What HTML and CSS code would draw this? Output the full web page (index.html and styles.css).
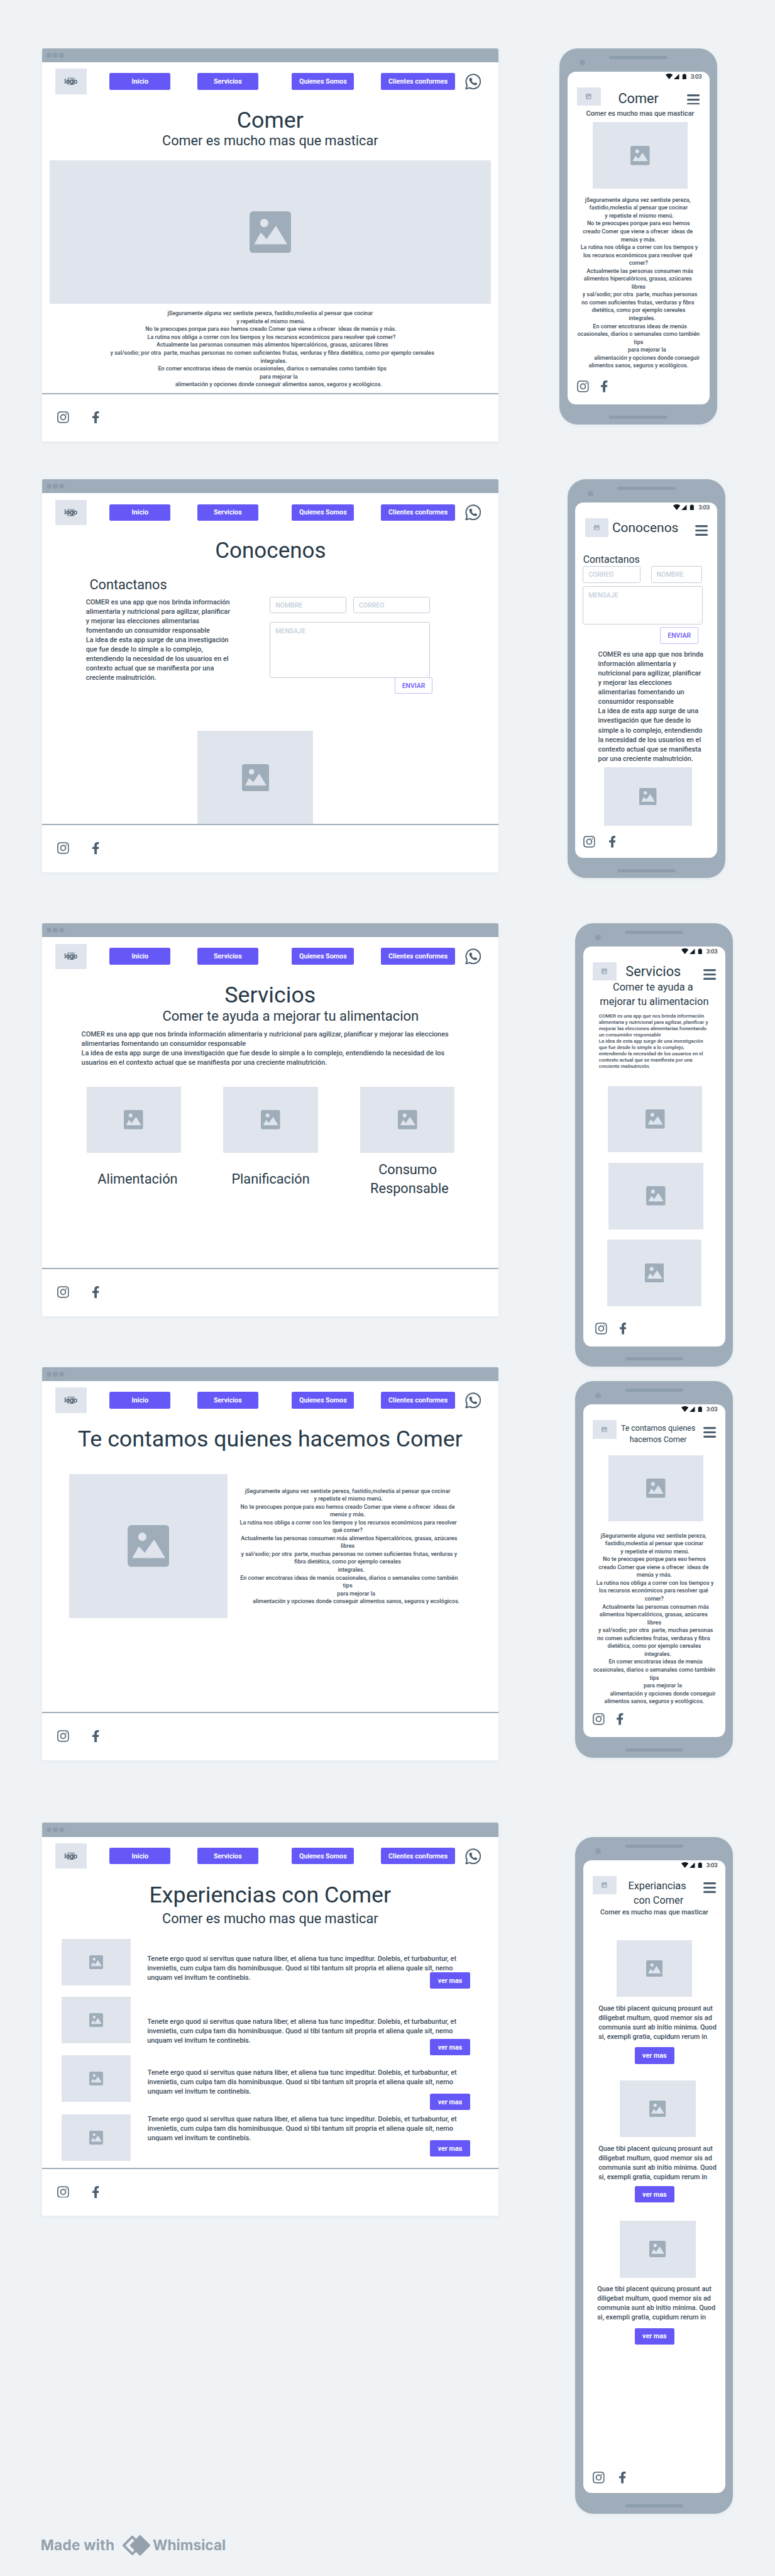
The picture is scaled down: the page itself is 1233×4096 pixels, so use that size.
FILE: index.html
```html
<!DOCTYPE html>
<html lang="es">
<head>
<meta charset="utf-8">
<title>Comer - wireframes</title>
<link rel="stylesheet" href="styles.css">
</head>
<body>
<svg class="defs" aria-hidden="true">
  <symbol id="pic" viewBox="0 0 106 106">
    <rect width="106" height="106" rx="10" fill="#9eadb9"/>
    <circle cx="37.3" cy="29.8" r="10.5" fill="#e0e5ed"/>
    <path d="M13.5 82.5L28.8 55.5 43.6 72 67 38.500 94 82.500z" fill="#e0e5ed" stroke="#e0e5ed" stroke-width="2" stroke-linejoin="round"/>
  </symbol>
  <symbol id="wa" viewBox="0 0 40 40">
    <path d="M2.200 38.300L4.900 29.300A17.900 18 0 1 1 11.300 35.600z" fill="none" stroke="#4c5f6f" stroke-width="3.200"/>
    <path d="M13.500 10.800c1.500-.3 2.600.2 3 1.200l1.200 3.400c.3 1-.6 2-1.400 2.800 1.500 3 3.600 4.800 6.600 6 1-.9 1.800-2 2.900-1.600l3.400 1.400c1 .5 1 1.800.6 2.900-.8 1.800-2.700 2.600-4.800 2.300C17.500 28 10.800 20.500 10.200 15c-.1-2 1.200-3.700 3.300-4.200z" fill="#4c5f6f"/>
  </symbol>
  <symbol id="ig" viewBox="0 0 30 30">
    <rect x="1.500" y="1.500" width="27" height="27" rx="6.500" fill="none" stroke="#4c5f6f" stroke-width="2.600"/>
    <circle cx="15" cy="15" r="6.300" fill="none" stroke="#4c5f6f" stroke-width="2.700"/>
    <circle cx="22.800" cy="7.200" r="1.800" fill="#4c5f6f"/>
  </symbol>
  <symbol id="fb" viewBox="22 0 276 512" preserveAspectRatio="none">
    <path d="M279.140 288l14.220-92.660h-88.910v-60.130c0-25.350 12.420-50.060 52.240-50.060h40.420V6.260S260.430 0 225.360 0c-73.220 0-121.080 44.380-121.080 124.720v70.620H22.890V288h81.390v224h100.170V288z" fill="#4c5f6f"/>
  </symbol>
  <symbol id="status" viewBox="0 0 53 14.500">
    <path d="M0 3.200C5-.900 13-.900 18 3.200L9 14.500zM20.600 14.500L34.300.800V14.500zM42.700 2.200h2.300V.700h5v1.500h2.400v12.300h-9.700z" fill="#101a21"/>
  </symbol>
  <symbol id="menu" viewBox="0 0 32 27">
    <path d="M2.500 2.500h27M2.500 13.500h27M2.500 24.500h27" stroke="#4c5f6f" stroke-width="5" stroke-linecap="round"/>
  </symbol>
  <symbol id="grip" viewBox="0 0 10 10">
    <path d="M1 9L9 1M5 9l4-4" stroke="#c3ced8" stroke-width="1"/>
  </symbol>
</svg>

<main class="canvas">
<div class="desktops">

  <section class="window">
    <div class="bar"><i></i><i></i><i></i></div>
    <nav>
      <div class="ph logo"><svg><use href="#pic"/></svg><span>logo</span></div>
      <a class="btn inicio">Inicio</a><a class="btn servicios">Servicios</a><a class="btn quienes">Quienes Somos</a><a class="btn clientes">Clientes conformes</a>
      <svg class="wa"><use href="#wa"/></svg>
    </nav>
    <div class="content">
      <h1>Comer</h1>
      <h2>Comer es mucho mas que masticar</h2>
      <div class="ph hero"><svg class="lg"><use href="#pic"/></svg></div>
      <p class="small home-text">jSeguramente alguna vez sentiste pereza, fastidio,molestia al pensar que cocinar
 y repetiste el mismo menú.
 No te preocupes porque para eso hemos creado Comer que viene a ofrecer  ideas de menús y más.
  La rutina nos obliga a correr con los tiempos y los recursos económicos para resolver qué comer?
   Actualmente las personas consumen más alimentos hipercalóricos, grasas, azúcares libres
   y sal/sodio; por otra  parte, muchas personas no comen suficientes frutas, verduras y fibra dietética, como por ejemplo cereales
     integrales.
   En comer encotraras ideas de menús ocasionales, diarios o semanales como también tips
            para mejorar la
            alimentación y opciones donde conseguir alimentos sanos, seguros y ecológicos.</p>
    </div>
    <footer><svg class="ig"><use href="#ig"/></svg><svg class="fb"><use href="#fb"/></svg></footer>
  </section>

  <section class="window w2">
    <div class="bar"><i></i><i></i><i></i></div>
    <nav>
      <div class="ph logo"><svg><use href="#pic"/></svg><span>logo</span></div>
      <a class="btn inicio">Inicio</a><a class="btn servicios">Servicios</a><a class="btn quienes">Quienes Somos</a><a class="btn clientes">Clientes conformes</a>
      <svg class="wa"><use href="#wa"/></svg>
    </nav>
    <div class="content">
      <h1>Conocenos</h1>
      <div class="contact">
        <div class="about">
          <h2>Contactanos</h2>
          <p>COMER es una app que nos brinda información
alimentaria y nutricional para agilizar, planificar
y mejorar las elecciones alimentarias
fomentando un consumidor responsable
La idea de esta app surge de una investigación
que fue desde lo simple a lo complejo,
entendiendo la necesidad de los usuarios en el
contexto actual que se manifiesta por una
creciente malnutrición.</p>
        </div>
        <div class="form">
          <div class="fields"><div class="field">NOMBRE</div><div class="field">CORREO</div></div>
          <div class="area">MENSAJE<svg><use href="#grip"/></svg></div>
          <a class="send">ENVIAR</a>
        </div>
      </div>
      <div class="ph office"><svg class="md"><use href="#pic"/></svg></div>
    </div>
    <footer><svg class="ig"><use href="#ig"/></svg><svg class="fb"><use href="#fb"/></svg></footer>
  </section>

  <section class="window w3">
    <div class="bar"><i></i><i></i><i></i></div>
    <nav>
      <div class="ph logo"><svg><use href="#pic"/></svg><span>logo</span></div>
      <a class="btn inicio">Inicio</a><a class="btn servicios">Servicios</a><a class="btn quienes">Quienes Somos</a><a class="btn clientes">Clientes conformes</a>
      <svg class="wa"><use href="#wa"/></svg>
    </nav>
    <div class="content">
      <h1>Servicios</h1>
      <h2 class="tagline">Comer te ayuda a mejorar tu alimentacion</h2>
      <p class="intro">COMER es una app que nos brinda información alimentaria y nutricional para agilizar, planificar y mejorar las elecciones
alimentarias fomentando un consumidor responsable
La idea de esta app surge de una investigación que fue desde lo simple a lo complejo, entendiendo la necesidad de los
usuarios en el contexto actual que se manifiesta por una creciente malnutrición.</p>
      <div class="services">
        <div class="service"><div class="ph"><svg class="sm"><use href="#pic"/></svg></div><h3 class="s1">Alimentación</h3></div>
        <div class="service"><div class="ph"><svg class="sm"><use href="#pic"/></svg></div><h3>Planificación</h3></div>
        <div class="service"><div class="ph"><svg class="sm"><use href="#pic"/></svg></div><h3 class="s3">Consumo 
Responsable</h3></div>
      </div>
    </div>
    <footer><svg class="ig"><use href="#ig"/></svg><svg class="fb"><use href="#fb"/></svg></footer>
  </section>

  <section class="window w4">
    <div class="bar"><i></i><i></i><i></i></div>
    <nav>
      <div class="ph logo"><svg><use href="#pic"/></svg><span>logo</span></div>
      <a class="btn inicio">Inicio</a><a class="btn servicios">Servicios</a><a class="btn quienes">Quienes Somos</a><a class="btn clientes">Clientes conformes</a>
      <svg class="wa"><use href="#wa"/></svg>
    </nav>
    <div class="content">
      <h1>Te contamos quienes hacemos Comer</h1>
      <div class="team">
        <div class="ph"><svg class="lg"><use href="#pic"/></svg></div>
        <p class="small">jSeguramente alguna vez sentiste pereza, fastidio,molestia al pensar que cocinar
 y repetiste el mismo menú.
 No te preocupes porque para eso hemos creado Comer que viene a ofrecer  ideas de 
menús y más.
  La rutina nos obliga a correr con los tiempos y los recursos económicos para resolver 
qué comer?
   Actualmente las personas consumen más alimentos hipercalóricos, grasas, azúcares 
libres
   y sal/sodio; por otra  parte, muchas personas no comen suficientes frutas, verduras y 
fibra dietética, como por ejemplo cereales
     integrales.
   En comer encotraras ideas de menús ocasionales, diarios o semanales como también 
tips
            para mejorar la
            alimentación y opciones donde conseguir alimentos sanos, seguros y ecológicos.</p>
      </div>
    </div>
    <footer><svg class="ig"><use href="#ig"/></svg><svg class="fb"><use href="#fb"/></svg></footer>
  </section>

  <section class="window w5">
    <div class="bar"><i></i><i></i><i></i></div>
    <nav>
      <div class="ph logo"><svg><use href="#pic"/></svg><span>logo</span></div>
      <a class="btn inicio">Inicio</a><a class="btn servicios">Servicios</a><a class="btn quienes">Quienes Somos</a><a class="btn clientes">Clientes conformes</a>
      <svg class="wa"><use href="#wa"/></svg>
    </nav>
    <div class="content">
      <h1>Experiencias con Comer</h1>
      <h2 class="sub">Comer es mucho mas que masticar</h2>
      <div class="stories">
        <div class="thumbs">
          <div class="ph"><svg class="xs"><use href="#pic"/></svg></div>
          <div class="ph"><svg class="xs"><use href="#pic"/></svg></div>
          <div class="ph"><svg class="xs"><use href="#pic"/></svg></div>
          <div class="ph"><svg class="xs"><use href="#pic"/></svg></div>
        </div>
        <div class="quotes">
          <p>Tenete ergo quod si servitus quae natura liber, et aliena tua tunc impeditur. Dolebis, et turbabuntur, et
invenietis, cum culpa tam dis hominibusque. Quod si tibi tantum sit propria et aliena quale sit, nemo
unquam vel invitum te continebis.</p>
          <a class="btn more m1">ver mas</a>
          <p class="q2">Tenete ergo quod si servitus quae natura liber, et aliena tua tunc impeditur. Dolebis, et turbabuntur, et
invenietis, cum culpa tam dis hominibusque. Quod si tibi tantum sit propria et aliena quale sit, nemo
unquam vel invitum te continebis.</p>
          <a class="btn more m2">ver mas</a>
          <p class="q3">Tenete ergo quod si servitus quae natura liber, et aliena tua tunc impeditur. Dolebis, et turbabuntur, et
invenietis, cum culpa tam dis hominibusque. Quod si tibi tantum sit propria et aliena quale sit, nemo
unquam vel invitum te continebis.</p>
          <a class="btn more m3">ver mas</a>
          <p class="q4">Tenete ergo quod si servitus quae natura liber, et aliena tua tunc impeditur. Dolebis, et turbabuntur, et
invenietis, cum culpa tam dis hominibusque. Quod si tibi tantum sit propria et aliena quale sit, nemo
unquam vel invitum te continebis.</p>
          <a class="btn more m3">ver mas</a>
        </div>
      </div>
    </div>
    <footer><svg class="ig"><use href="#ig"/></svg><svg class="fb"><use href="#fb"/></svg></footer>
  </section>

  <div class="credit">
    <span class="made">Made with</span>
    <svg viewBox="0 0 72.300 52"><path d="M26.300 4.200L48 26 26.300 47.800 4.500 26z" fill="none" stroke="#94a1ac" stroke-width="6" stroke-linejoin="round"/><path d="M46 2L70 26 46 50 22 26z" fill="#94a1ac" stroke="#94a1ac" stroke-width="4" stroke-linejoin="round"/></svg>
    <span class="brand">Whimsical</span>
  </div>
</div>

<div class="phones">

  <section class="phone p1">
    <div class="top"><i class="cam"></i><i class="slot"></i></div>
    <div class="screen">
      <div class="status"><svg><use href="#status"/></svg><span>3:03</span></div>
      <header><div class="ph"><svg><use href="#pic"/></svg></div><h2>Comer</h2><svg class="menu"><use href="#menu"/></svg></header>
      <p class="sub">Comer es mucho mas que masticar</p>
      <div class="ph photo"><svg class="sm"><use href="#pic"/></svg></div>
      <p class="small">jSeguramente alguna vez sentiste pereza, 
fastidio,molestia al pensar que cocinar
 y repetiste el mismo menú.
 No te preocupes porque para eso hemos 
creado Comer que viene a ofrecer  ideas de 
menús y más.
  La rutina nos obliga a correr con los tiempos y 
los recursos económicos para resolver qué 
comer?
   Actualmente las personas consumen más 
alimentos hipercalóricos, grasas, azúcares 
libres
   y sal/sodio; por otra  parte, muchas personas 
no comen suficientes frutas, verduras y fibra 
dietética, como por ejemplo cereales
     integrales.
   En comer encotraras ideas de menús 
ocasionales, diarios o semanales como también
tips
            para mejorar la
            alimentación y opciones donde conseguir
alimentos sanos, seguros y ecológicos.</p>
      <div class="social"><svg class="ig"><use href="#ig"/></svg><svg class="fb"><use href="#fb"/></svg></div>
    </div>
    <i class="slot"></i>
  </section>

  <section class="phone p2">
    <div class="top"><i class="cam"></i><i class="slot"></i></div>
    <div class="screen">
      <div class="status"><svg><use href="#status"/></svg><span>3:03</span></div>
      <header><div class="ph"><svg><use href="#pic"/></svg></div><h2>Conocenos</h2><svg class="menu"><use href="#menu"/></svg></header>
      <h3>Contactanos</h3>
      <div class="fields"><div class="field">CORREO</div><div class="field short">NOMBRE</div></div>
      <div class="area">MENSAJE<svg><use href="#grip"/></svg></div>
      <a class="send">ENVIAR</a>
      <p class="about">COMER es una app que nos brinda
información alimentaria y
nutricional para agilizar, planificar
y mejorar las elecciones
alimentarias fomentando un
consumidor responsable
La idea de esta app surge de una
investigación que fue desde lo
simple a lo complejo, entendiendo
la necesidad de los usuarios en el
contexto actual que se manifiesta
por una creciente malnutrición.</p>
      <div class="ph photo"><svg class="sm"><use href="#pic"/></svg></div>
      <div class="social"><svg class="ig"><use href="#ig"/></svg><svg class="fb"><use href="#fb"/></svg></div>
    </div>
    <i class="slot"></i>
  </section>

  <section class="phone p3">
    <div class="top"><i class="cam"></i><i class="slot"></i></div>
    <div class="screen">
      <div class="status"><svg><use href="#status"/></svg><span>3:03</span></div>
      <header><div class="ph"><svg><use href="#pic"/></svg></div><h2>Servicios</h2><svg class="menu"><use href="#menu"/></svg></header>
      <h3>Comer te ayuda a 
mejorar tu alimentacion</h3>
      <p class="tiny">COMER es una app que nos brinda información
alimentaria y nutricional para agilizar, planificar y
mejorar las elecciones alimentarias fomentando
un consumidor responsable
La idea de esta app surge de una investigación
que fue desde lo simple a lo complejo,
entendiendo la necesidad de los usuarios en el
contexto actual que se manifiesta por una
creciente malnutrición.</p>
      <div class="ph photo a"><svg class="sm"><use href="#pic"/></svg></div>
      <div class="ph photo b"><svg class="sm"><use href="#pic"/></svg></div>
      <div class="ph photo c"><svg class="sm"><use href="#pic"/></svg></div>
      <div class="social"><svg class="ig"><use href="#ig"/></svg><svg class="fb"><use href="#fb"/></svg></div>
    </div>
    <i class="slot"></i>
  </section>

  <section class="phone p4">
    <div class="top"><i class="cam"></i><i class="slot"></i></div>
    <div class="screen">
      <div class="status"><svg><use href="#status"/></svg><span>3:03</span></div>
      <header><div class="ph"><svg><use href="#pic"/></svg></div><h2>Te contamos quienes
hacemos Comer</h2><svg class="menu"><use href="#menu"/></svg></header>
      <div class="ph photo"><svg class="sm"><use href="#pic"/></svg></div>
      <p class="small">jSeguramente alguna vez sentiste pereza, 
fastidio,molestia al pensar que cocinar
 y repetiste el mismo menú.
 No te preocupes porque para eso hemos 
creado Comer que viene a ofrecer  ideas de 
menús y más.
  La rutina nos obliga a correr con los tiempos y 
los recursos económicos para resolver qué 
comer?
   Actualmente las personas consumen más 
alimentos hipercalóricos, grasas, azúcares 
libres
   y sal/sodio; por otra  parte, muchas personas 
no comen suficientes frutas, verduras y fibra 
dietética, como por ejemplo cereales
     integrales.
   En comer encotraras ideas de menús 
ocasionales, diarios o semanales como también
tips
            para mejorar la
            alimentación y opciones donde conseguir
alimentos sanos, seguros y ecológicos.</p>
      <div class="social"><svg class="ig"><use href="#ig"/></svg><svg class="fb"><use href="#fb"/></svg></div>
    </div>
    <i class="slot"></i>
  </section>

  <section class="phone p5">
    <div class="top"><i class="cam"></i><i class="slot"></i></div>
    <div class="screen">
      <div class="status"><svg><use href="#status"/></svg><span>3:03</span></div>
      <header><div class="ph"><svg><use href="#pic"/></svg></div><h2>Experiancias
 con Comer</h2><svg class="menu"><use href="#menu"/></svg></header>
      <p class="sub">Comer es mucho mas que masticar</p>
      <div class="ph photo a"><svg class="s42"><use href="#pic"/></svg></div>
      <p class="quote">Quae tibi placent quicunq prosunt aut
diligebat multum, quod memor sis ad
communia sunt ab initio minima. Quod
si, exempli gratia, cupidum rerum in</p>
      <a class="btn more">ver mas</a>
      <div class="ph photo b"><svg class="s42"><use href="#pic"/></svg></div>
      <p class="quote">Quae tibi placent quicunq prosunt aut
diligebat multum, quod memor sis ad
communia sunt ab initio minima. Quod
si, exempli gratia, cupidum rerum in</p>
      <a class="btn more near">ver mas</a>
      <div class="ph photo c"><svg class="s42"><use href="#pic"/></svg></div>
      <p class="quote last">Quae tibi placent quicunq prosunt aut
diligebat multum, quod memor sis ad
communia sunt ab initio minima. Quod
si, exempli gratia, cupidum rerum in</p>
      <a class="btn more">ver mas</a>
      <div class="social"><svg class="ig"><use href="#ig"/></svg><svg class="fb"><use href="#fb"/></svg></div>
    </div>
    <i class="slot"></i>
  </section>

</div>
</main>
</body>
</html>
```
FILE: styles.css
```css
/* 1rem stands for ten units of the wireframe canvas */
html { font-size: 6.2748px; }
* { box-sizing: border-box; }
body {
  margin: 0;
  background: #eff3f6;
  color: #3b4b59;
  font: 500 1.735rem/2.4rem Roboto, "Liberation Sans", sans-serif;
}
svg { display: block; flex: none; }
.defs { position: absolute; width: 0; height: 0; }
h1, h2, h3, p { margin: 0; white-space: pre; }
h1, h2, h3 { font-weight: 400; color: #273947; }
h1 { font-size: 5.7rem; line-height: 6.4rem; text-align: center; }
h2 { font-size: 3.46rem; line-height: 4rem; text-align: center; }
.small { font-size: 1.445rem; line-height: 2rem; text-align: center; }

.canvas { display: flex; align-items: flex-start; height: 4096px; padding: 12.2rem 0 0 10.6rem; overflow: hidden; }
.desktops { width: 115.8rem; }
.phones { margin-left: 15.5rem; }

/* shared pieces */
.ph { display: flex; align-items: center; justify-content: center; background: #e0e5ed; }
.lg { width: 10.6rem; height: 10.6rem; }
.md { width: 6.9rem; height: 6.9rem; }
.sm { width: 4.9rem; height: 4.9rem; }
.s42 { width: 4.2rem; height: 4.2rem; }
.xs { width: 3.5rem; height: 3.5rem; }
.ig { width: 3rem; height: 3rem; }
.fb { width: 1.7rem; height: 3.1rem; }
.btn {
  display: flex; align-items: center; justify-content: center;
  height: 4.2rem; border-radius: .4rem;
  background: #6658f6; color: #fff;
  font-size: 1.715rem; font-weight: 700;
}
.more { width: 10.1rem; }
.field, .area, .send { border: .2rem solid #c3ced8; border-radius: .4rem; font-size: 1.67rem; color: #c3d0db; }
.field { display: flex; align-items: center; height: 4.2rem; padding-left: 1.25rem; }
.area { position: relative; padding: .9rem 0 0 1.25rem; }
.area svg { position: absolute; right: .2rem; bottom: .2rem; width: .9rem; height: .9rem; }
.fields { display: flex; }
.send {
  display: flex; align-items: center; justify-content: center;
  width: 9.65rem; height: 4.2rem;
  border-color: rgba(102, 88, 246, .4); color: #6658f6;
}

/* browser windows */
.window { height: 99.6rem; background: #fff; border-radius: .4rem .4rem 0 0; box-shadow: 0 .3rem .9rem rgba(50, 70, 95, .06); }
.w2 { margin-top: 9.6rem; }
.w3, .w4 { margin-top: 12.9rem; }
.w5 { margin-top: 15.9rem; }
.bar { display: flex; align-items: center; gap: .4rem; height: 3.6rem; padding-left: 1.25rem; background: #9eadb9; border-radius: .4rem .4rem 0 0; }
.bar i { width: 1.2rem; height: 1.2rem; border-radius: 50%; background: #8c9dab; }
nav { display: flex; align-items: center; height: 8.04rem; padding: 1.64rem 0 0 3.35rem; }
.logo { position: relative; width: 8rem; height: 6.4rem; font-size: 1.7rem; }
.logo svg { width: 1.9rem; height: 1.95rem; }
.logo span { position: absolute; }
.inicio { width: 15.4rem; margin-left: 5.85rem; }
.servicios { width: 15.4rem; margin-left: 6.85rem; }
.quienes { width: 15.8rem; margin-left: 8.55rem; }
.clientes { width: 18.75rem; margin-left: 6.85rem; }
.wa { width: 4.05rem; height: 4.05rem; margin-left: 2.5rem; }
.content { height: 75.8rem; padding-top: 3.46rem; }
.window footer { display: flex; height: 12.16rem; padding: 4.26rem 0 0 3.95rem; border-top: 2px solid #9eafbc; }
.window .fb { margin-left: 5.95rem; }

.hero { width: 111.8rem; height: 36.4rem; margin: 2.9rem auto 0 2rem; }
.home-text { margin-top: 1.46rem; }

.w2 h1 { font-size: 5.58rem; padding-left: .2rem; }
.contact { display: flex; margin-top: 3.18rem; }
.about h2 { width: 20rem; margin-left: 12.1rem; text-align: left; }
.window .about { width: 57.85rem; }
.window .about p { margin: 1.29rem 0 0 11.2rem; }
.form { width: 41.25rem; padding-top: 5.16rem; }
.form .fields { gap: 1.8rem; }
.form .field { width: 19.35rem; }
.form .area { width: 40.55rem; height: 14.2rem; margin-top: 2.23rem; }
.form .send { margin: -.2rem 0 0 31.6rem; }
.office { width: 29.3rem; height: 23.85rem; margin: 9.33rem 0 0 39.5rem; }

.tagline { padding-left: 30.6rem; text-align: left; font-size: 3.5rem; }
.intro { margin: 1.46rem 0 0 10.05rem; font-size: 1.745rem; }
.services { display: flex; gap: 10.73rem; margin: 4.87rem 0 0 11.33rem; }
.service { width: 23.97rem; }
.service .ph { height: 16.8rem; }
.service h3 { display: flex; align-items: center; justify-content: center; height: 9.6rem; margin-top: 1.97rem; font-size: 3.46rem; line-height: 4.8rem; text-align: center; }
.service .s1 { padding-left: 1.96rem; }
.service .s3 { padding-left: 1rem; }

.team { display: flex; align-items: flex-start; margin-top: 5.7rem; }
.team .ph { width: 40.15rem; height: 36.4rem; margin-left: 6.97rem; }
.team p { width: 60rem; margin: 3.24rem 0 0 .43rem; }

.window .sub { margin-top: .78rem; }
.stories { display: flex; margin-top: 3.17rem; }
.thumbs { display: flex; flex-direction: column; gap: 2.93rem; margin-left: 5rem; }
.thumbs .ph { width: 17.6rem; height: 11.8rem; }
.thumbs .ph:last-child { margin-top: .27rem; }
.quotes { display: flex; flex-direction: column; width: 81.84rem; margin: 3.78rem 0 0 4.13rem; }
.quotes p { font-size: 1.745rem; }
.quotes .more { align-self: flex-end; }
.m1 { margin-top: -2.55rem; }
.q2 { margin-top: 7.12rem; }
.m2 { margin-top: -1.6rem; }
.q3 { margin: 3.08rem 0 0 .1rem; }
.m3 { margin-top: -.63rem; }
.q4 { margin: 1.04rem 0 0 .1rem; }

.credit { display: flex; align-items: center; height: 5.2rem; margin-top: 80.9rem; color: #94a1ac; font: 700 3.6rem/5.2rem Inter, "Liberation Sans", sans-serif; white-space: nowrap; }
.credit svg { width: 7.23rem; height: 5.2rem; margin-left: 1.8rem; }
.made { width: 18.9rem; margin-left: -.3rem; letter-spacing: .05rem; }
.brand { margin-left: .5rem; letter-spacing: .01rem; }

/* phones */
.phone { display: flex; flex-direction: column; width: 40rem; border-radius: 4.6rem; background: #9eadb9; box-shadow: 0 .3rem .9rem rgba(50, 70, 95, .06); }
.top { display: flex; height: 6rem; }
.cam { width: 1.4rem; height: 1.4rem; margin: 3rem 0 0 5.1rem; border-radius: 50%; background: #8c9dab; }
.slot { width: 14.8rem; height: .8rem; border-radius: .4rem; background: #8c9dab; }
.top .slot { margin: 2rem 0 0 6.1rem; }
.screen { width: 36rem; height: 84.3rem; margin-left: 2rem; border-radius: 2.1rem; background: #fff; }
.screen + .slot { margin: 2.8rem 0 0 12.6rem; }
.status { display: flex; justify-content: flex-end; height: 3.98rem; padding: .48rem 2rem 0 0; color: #3b4650; font-size: 1.55rem; font-weight: 500; line-height: 1.45rem; letter-spacing: -.06rem; }
.status svg { width: 5.3rem; height: 1.45rem; margin-right: 1.1rem; }
.status span { width: 2.8rem; }
header { display: flex; align-items: flex-start; height: 4.66rem; padding-left: 2.4rem; }
header .ph { width: 6rem; height: 4.66rem; }
header .ph svg { width: 1.4rem; height: 1.4rem; }
header h2 { width: 21.97rem; line-height: 4.6rem; }
.menu { width: 3.2rem; height: 2.7rem; margin-top: 1.65rem; }
.photo { width: 24rem; height: 16.8rem; margin-left: 6.4rem; }
.social { display: flex; padding-left: 2.45rem; }
.social .fb { margin-left: 3rem; height: 3rem; }
.phone .sub { text-align: center; font-size: 1.73rem; }

.p1 { height: 95.4rem; }
.p1 h2 { padding-right: 2.84rem; margin-top: .65rem; }
.p1 .sub { margin-top: .75rem; padding-left: .8rem; }
.p1 .photo { margin-top: 1.01rem; }
.p1 .small { margin-top: 1.9rem; }
.p1 .social { margin-top: 2.75rem; }

.p2 { height: 101.1rem; margin: 13.8rem 0 0 2rem; }
.p2 .screen { height: 90rem; }
.p2 h2 { padding-right: 3.3rem; margin-top: .05rem; font-size: 3.34rem; }
.p2 h3 { margin: 4.37rem 0 0 1.95rem; font-size: 2.53rem; line-height: 3rem; }
.p2 .fields { gap: 2.75rem; margin: .07rem 0 0 1.9rem; }
.p2 .field { width: 14.55rem; }
.p2 .field.short { width: 12.97rem; }
.p2 .area { width: 30.37rem; height: 9.67rem; margin: .93rem 0 0 1.9rem; }
.p2 .send { margin: .67rem 0 0 21.5rem; }
.p2 .about { margin: 1.5rem 0 0 5.75rem; }
.p2 .photo { width: 22.27rem; height: 14.94rem; margin: .93rem 0 0 7.3rem; }
.p2 .photo svg { width: 4.4rem; height: 4.4rem; }
.p2 .social { margin-top: 2.5rem; padding-left: 2.07rem; }
.p2 .fb { margin-left: 3.4rem; }

.p3 { height: 112.4rem; margin: 11.4rem 0 0 4rem; }
.p3 .screen { height: 101.3rem; }
.p3 h2 { padding-right: 3.3rem; margin-top: .15rem; }
.p3 h3 { font-size: 2.62rem; line-height: 3.65rem; text-align: center; }
.p3 .tiny { margin: .91rem 0 0 3.95rem; font-size: 1.27rem; line-height: 1.6rem; }
.p3 .a { margin: 4.02rem 0 0 6.2rem; }
.p3 .b { margin-top: 2.72rem; }
.p3 .c { margin: 2.66rem 0 0 6rem; }
.p3 .social { margin-top: 4.22rem; padding-left: 3.07rem; }
.p3 .fb { margin-left: 3.1rem; }

.p4 { height: 95.5rem; margin: 3.65rem 0 0 4rem; }
.p4 h2 { padding-right: .8rem; margin-top: .6rem; font-size: 1.98rem; line-height: 2.8rem; }
.p4 .photo { margin-top: 4.16rem; }
.p4 .small { margin-top: 2.63rem; }
.p4 .social { margin-top: 2.02rem; }

.p5 { height: 171.5rem; margin: 20rem 0 0 4rem; }
.p5 .screen { height: 160.3rem; }
.p5 h2 { padding-right: 1.3rem; margin-top: .78rem; font-size: 2.6rem; line-height: 3.6rem; }
.p5 .sub { margin-top: 3.21rem; }
.p5 .photo { width: 19.2rem; height: 14.4rem; margin-left: 9.3rem; }
.p5 .a { margin: 5.95rem 0 0 8.4rem; }
.p5 .b { margin-top: 4.2rem; }
.p5 .c { margin-top: 4.65rem; }
.quote { margin: 1.66rem 0 0 3.85rem; }
.quote.last { margin-left: 3.55rem; }
.p5 .more { margin: 1.48rem 0 0 13rem; }
.p5 .near { margin-top: 1.13rem; }
.p5 .social { margin-top: 32.25rem; }
.p5 .fb { margin-left: 3.7rem; }
```
